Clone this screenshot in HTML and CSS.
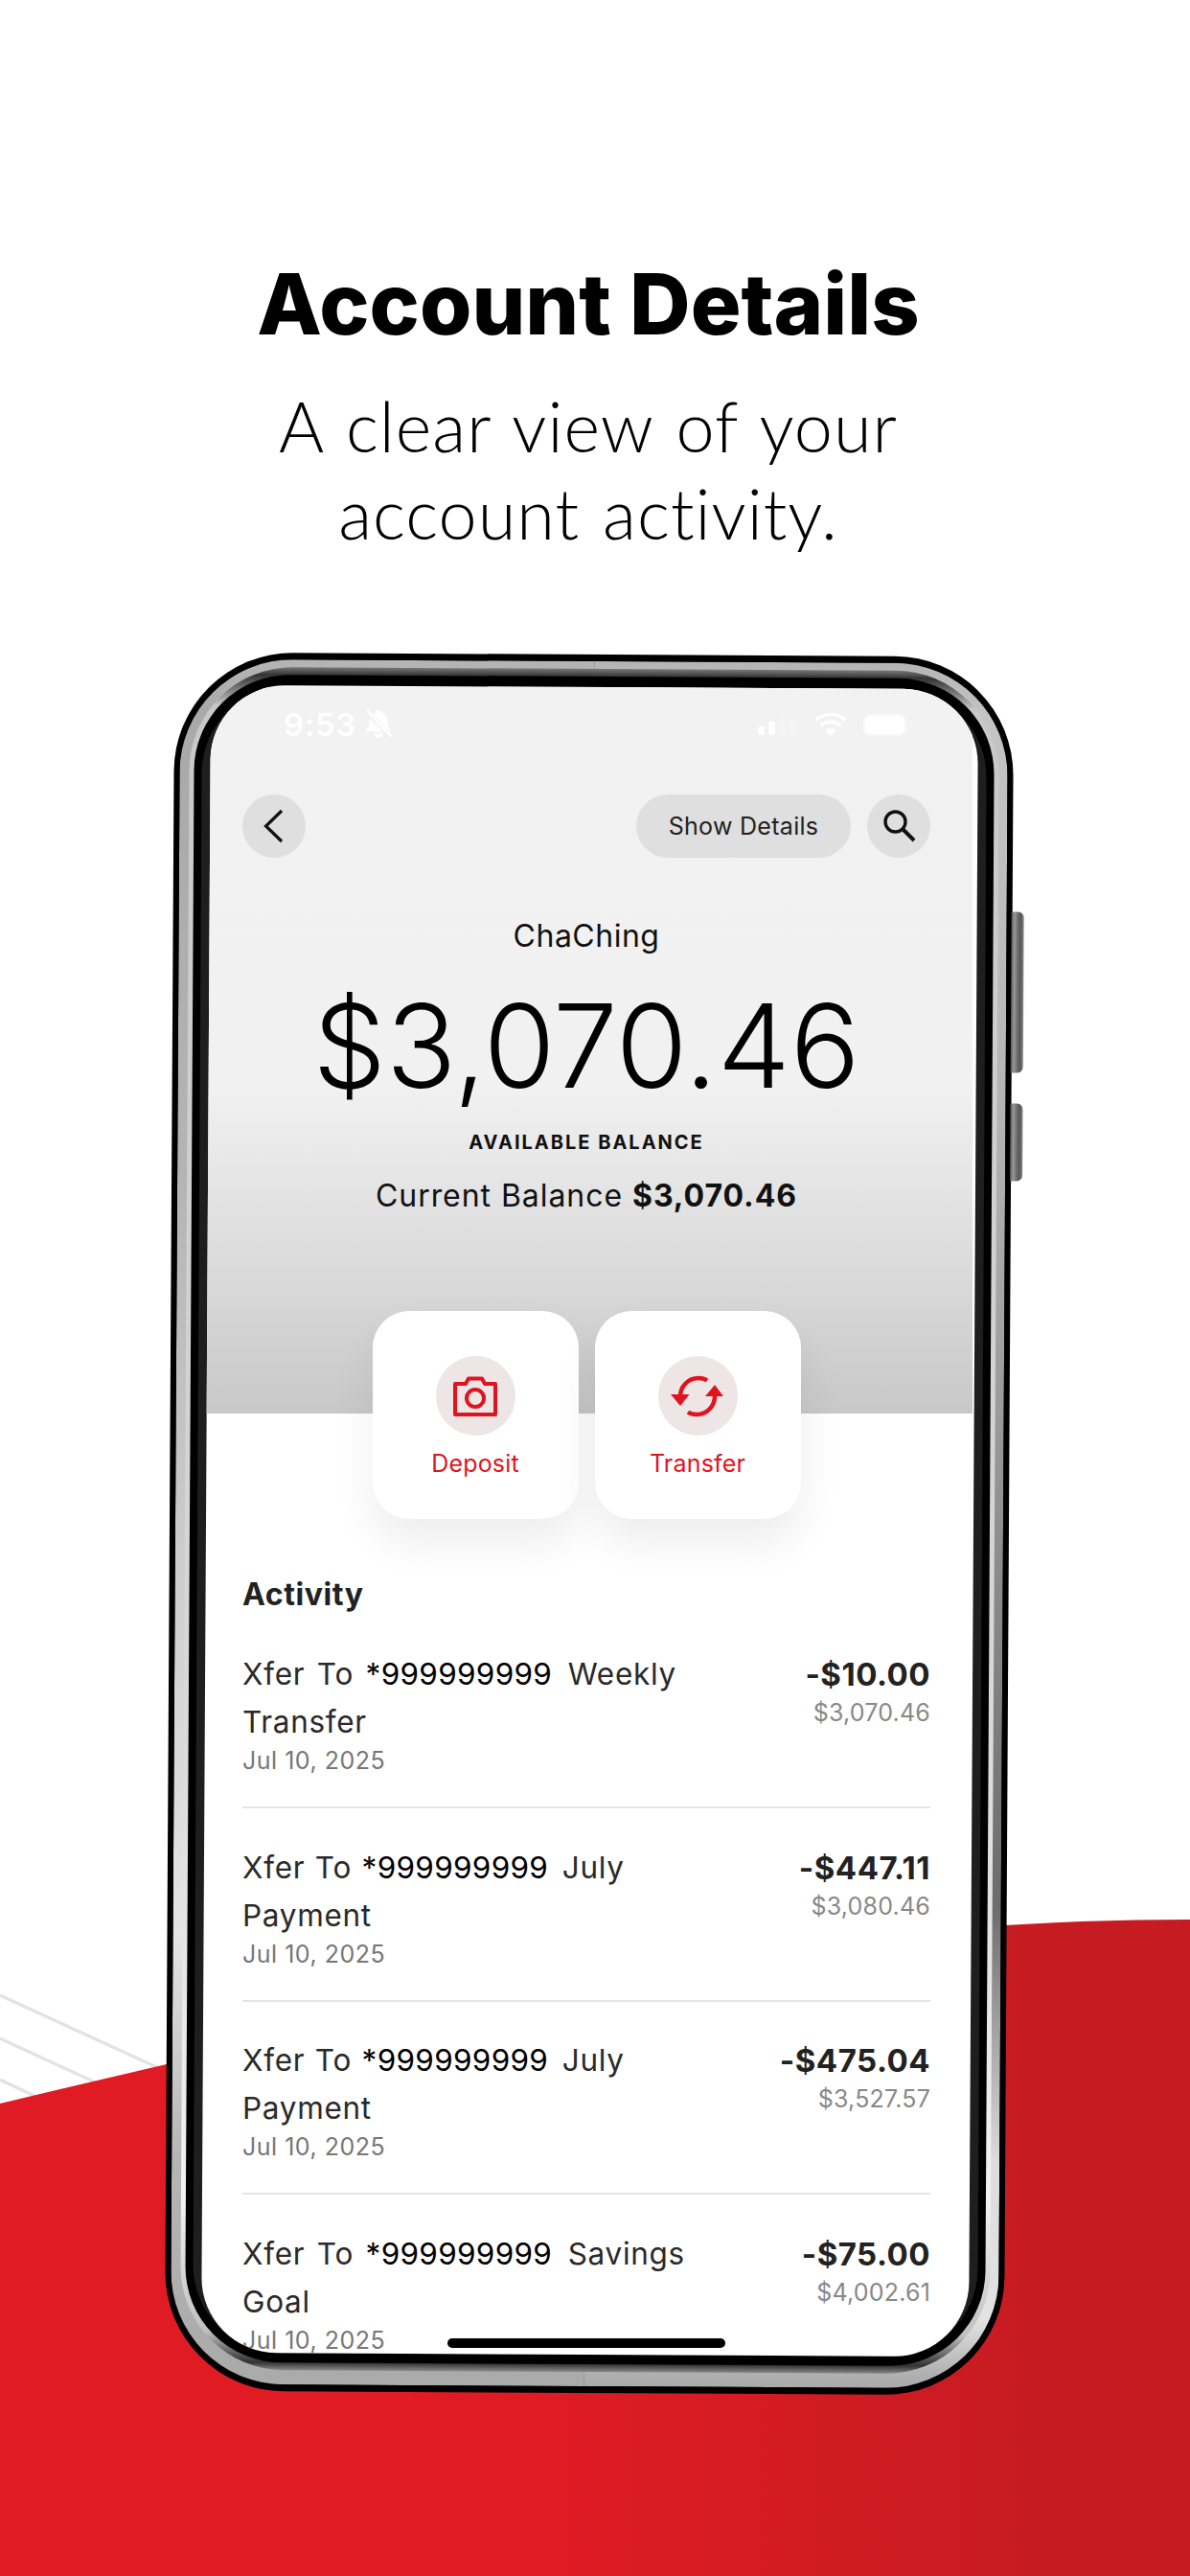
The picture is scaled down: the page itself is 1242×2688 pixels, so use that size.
FILE: index.html
```html
<!DOCTYPE html>
<html lang="en">
<head>
  <meta charset="UTF-8">
  <title>Account Details</title>
  <link rel="stylesheet" href="styles.css">
</head>
<body>

<!-- red wave and grey lines behind the phone -->
<svg class="backdrop" width="1242" height="2688" viewBox="0 0 1242 2688">
  <defs>
    <linearGradient id="redfade" x1="0" y1="0" x2="1" y2="0">
      <stop offset="0" stop-color="#e01b24"/>
      <stop offset="0.45" stop-color="#e01b24"/>
      <stop offset="0.86" stop-color="#c71b22"/>
      <stop offset="1" stop-color="#c71b22"/>
    </linearGradient>
  </defs>
  <g stroke="#e2e4e4" stroke-width="3.500" fill="none">
    <path d="M0 2082 L170 2160"/>
    <path d="M0 2127 L104 2175"/>
    <path d="M0 2170 L38 2188"/>
  </g>
  <path d="M0 2195 C400 2100 800 2003 1242 2003 L1242 2688 L0 2688 Z" fill="url(#redfade)"/>
</svg>

<header class="hero">
  <h1>Account Details</h1>
  <p>A clear view of your<br>account activity.</p>
</header>

<div class="device">
  <span class="side-btn side-btn-top"></span>
  <span class="side-btn side-btn-low"></span>
  <div class="device-metal">
    <div class="device-ring">
      <div class="device-bezel">
        <div class="device-edge">
          <div class="screen">
            <div class="screen-content">

              <section class="summary">
                <div class="status">
                  <div class="status-left">
                    <span class="time">9:53</span>
                    <svg width="30" height="32" viewBox="0 0 30 32" fill="#fff">
                      <path d="M15 1c1.600 0 2.700 1 2.900 2.400 4.300 1.300 6.300 4.800 6.500 9l.3 5 3.800 6.100H1.500l3.800-6.100.3-5c.2-4.200 2.200-7.700 6.500-9C12.300 2 13.400 1 15 1z"/>
                      <path d="M10.500 25.500h9c-.4 2.800-2.200 4.500-4.500 4.500s-4.100-1.700-4.500-4.500z"/>
                      <path d="M2 1 L29 30" stroke="#f2f2f2" stroke-width="5.500"/>
                      <path d="M3 1 L29 29" stroke="#fff" stroke-width="2.500"/>
                    </svg>
                  </div>
                  <div class="status-right">
                    <div class="signal">
                      <i class="bar-a"></i><i class="bar-b"></i><i class="bar-c"></i><i class="bar-d"></i>
                    </div>
                    <svg width="34" height="26" viewBox="0 0 34 26" fill="none" stroke="#fff" stroke-width="3.600">
                      <path d="M1.500 8.500C10 .5 24 .5 32.500 8.500"/>
                      <path d="M7 14c5.500-5 14.500-5 20 0"/>
                      <path d="M17 25l-5.500-6c3-2.600 8-2.600 11 0z" fill="#fff" stroke="none"/>
                    </svg>
                    <span class="battery"></span>
                  </div>
                </div>

                <div class="topbar">
                  <button class="round-btn">
                    <svg width="24" height="36" viewBox="0 0 24 36" fill="none" stroke="#111" stroke-width="3.200">
                      <path d="M20 2 L3.500 18 L20 34"/>
                    </svg>
                  </button>
                  <div class="topbar-right">
                    <button class="pill-btn">Show Details</button>
                    <button class="round-btn">
                      <svg width="36" height="36" viewBox="0 0 36 36" fill="none" stroke="#111" stroke-width="3.400">
                        <circle cx="14.500" cy="13.500" r="10.500"/>
                        <path d="M22 21 L34 33" stroke-width="4"/>
                      </svg>
                    </button>
                  </div>
                </div>

                <div class="acct-name">ChaChing</div>
                <div class="balance">$3,070.46</div>
                <div class="balance-label">AVAILABLE BALANCE</div>
                <div class="balance-current">Current Balance <b>$3,070.46</b></div>

                <div class="actions">
                  <div class="action-card">
                    <span class="action-icon">
                      <svg width="48" height="44" viewBox="0 0 48 44" fill="none" stroke="#e0141f" stroke-width="4" stroke-linejoin="round">
                        <path d="M3 9h11l3-5.500h14L34 9h11v32H3z"/>
                        <circle cx="24" cy="24" r="9"/>
                      </svg>
                    </span>
                    <span class="action-label">Deposit</span>
                  </div>
                  <div class="action-card">
                    <span class="action-icon">
                      <svg width="56" height="44" viewBox="0 0 56 44" fill="none" stroke="#e0141f" stroke-width="4.500">
                        <path d="M10 22C10 12 18 3 29 3c4 0 7 1 9 2.500"/>
                        <path d="M46 22c0 10-8 19-19 19-4 0-7-1-9-2.500"/>
                        <path d="M0 20h19.500L10 32z" fill="#e0141f" stroke="none"/>
                        <path d="M55 22H36L46 10z" fill="#e0141f" stroke="none"/>
                      </svg>
                    </span>
                    <span class="action-label">Transfer</span>
                  </div>
                </div>
              </section>

              <section class="activity">
                <h2>Activity</h2>

                <div class="txn">
                  <div class="txn-main">
                    <div class="txn-title">Xfer To <em>*999999999</em> Weekly Transfer</div>
                    <div class="txn-date">Jul 10, 2025</div>
                  </div>
                  <div class="txn-side">
                    <div class="txn-amount">-$10.00</div>
                    <div class="txn-after">$3,070.46</div>
                  </div>
                </div>

                <div class="txn">
                  <div class="txn-main">
                    <div class="txn-title txn-title-tight">Xfer To <em>*999999999</em> July Payment</div>
                    <div class="txn-date">Jul 10, 2025</div>
                  </div>
                  <div class="txn-side">
                    <div class="txn-amount">-$447.11</div>
                    <div class="txn-after">$3,080.46</div>
                  </div>
                </div>

                <div class="txn">
                  <div class="txn-main">
                    <div class="txn-title txn-title-tight">Xfer To <em>*999999999</em> July Payment</div>
                    <div class="txn-date">Jul 10, 2025</div>
                  </div>
                  <div class="txn-side">
                    <div class="txn-amount">-$475.04</div>
                    <div class="txn-after">$3,527.57</div>
                  </div>
                </div>

                <div class="txn">
                  <div class="txn-main">
                    <div class="txn-title">Xfer To <em>*999999999</em> Savings Goal</div>
                    <div class="txn-date">Jul 10, 2025</div>
                  </div>
                  <div class="txn-side">
                    <div class="txn-amount">-$75.00</div>
                    <div class="txn-after">$4,002.61</div>
                  </div>
                </div>
              </section>

              <div class="home-bar"></div>
            </div>
          </div>
        </div>
      </div>
    </div>
  </div>
</div>

</body>
</html>
```

FILE: styles.css
```css
* {
  box-sizing: border-box;
}
body {
  margin: 0;
  width: 1242px;
  height: 2688px;
  position: relative;
  overflow: hidden;
  background-color: #ffffff;
  color: #000;
  font-family: Inter, "Liberation Sans", sans-serif;
}
.backdrop {
  position: absolute;
  left: 0;
  top: 0;
}

/* headline */
.hero {
  position: relative;
  padding: 267px 14px 0 0;
  text-align: center;
}
.hero h1 {
  margin: 0;
  font-size: 88px;
  line-height: 100px;
  font-weight: 800;
}
.hero p {
  margin: 32px 0 0;
  font-family: Lato, "Liberation Sans", sans-serif;
  font-size: 72px;
  line-height: 91px;
  font-weight: 300;
  letter-spacing: 1px;
  word-spacing: 3.500px;
}

/* phone frame */
.device {
  position: absolute;
  left: 177px;
  top: 683px;
  width: 876px;
  height: 1814px;
  transform: rotate(0.33deg);
  display: flex;
  padding: 7px 6px;
  background: #000;
  border-radius: 124px;
}
.side-btn {
  position: absolute;
  right: -12px;
  width: 13px;
  border-radius: 0 6px 6px 0;
  background: linear-gradient(90deg, #555, #999 25%, #777 45%, #555 75%, #888);
}
.side-btn-top {
  top: 266px;
  height: 168px;
}
.side-btn-low {
  top: 466px;
  height: 81px;
}
/* each side of the metal catches different light */
.device-metal {
  flex: 1;
  display: flex;
  padding: 8px 9px 15px 10px;
  border-radius: 118px;
  background:
    linear-gradient(180deg, #b5b5b5 0, #a9a9a9 3%, #b4b4b4 30%, #e4e4e4 74%, #b5b5b5 87%, #aaaaaa 100%) left / 50% 100% no-repeat,
    linear-gradient(180deg, #b5b5b5 0, #c4c4c4 3%, #b5b5b5 25%, #a8a8a8 35%, #6c6c6c 72%, #999 78%, #dddddd 87%, #e2e2e2 96%, #b0b0b0 99.200%, #aaaaaa 100%) right / 50% 100% no-repeat;
}
.device-ring {
  flex: 1;
  display: flex;
  padding: 8px 5px;
  border-radius: 108px;
  background: linear-gradient(180deg, #777 0, #333 8px, #c8c8c8 40px, #d8d8d8 60%, #f2f2f2 90%, #c0c0c0 calc(100% - 40px), #333 calc(100% - 8px), #888 100%);
}
.device-bezel {
  flex: 1;
  display: flex;
  padding: 11px 8px 10px;
  border-radius: 100px;
  background: #000;
}
.device-edge {
  flex: 1;
  display: flex;
  padding: 0 9px;
  border-radius: 92px;
  background: #1e1e1e;
}
.screen {
  flex: 1;
  overflow: hidden;
  border-radius: 78px;
  background: #fff;
}
/* the picture inside the frame sits straight */
.screen-content {
  width: 800px;
  height: 1740px;
  position: relative;
  transform: rotate(-0.33deg);
}

/* top part of the app */
.summary {
  height: 758px;
  padding: 24px 44px 0 38px;
  background: linear-gradient(180deg, #f2f2f2 0, #f1f1f1 55%, #c8c8c8 100%);
  text-align: center;
}
.status {
  height: 30px;
  display: flex;
  justify-content: space-between;
  align-items: center;
  padding: 0 27px 0 43px;
}
.status-left {
  display: flex;
  align-items: center;
  gap: 8px;
}
.time {
  color: #fff;
  font-size: 33px;
  font-weight: 600;
  line-height: 30px;
  letter-spacing: 0.6px;
}
.status-right {
  display: flex;
  align-items: center;
  gap: 19px;
}
.signal {
  display: flex;
  align-items: flex-end;
  gap: 4px;
  height: 22px;
}
.signal i {
  display: block;
  width: 7px;
  background: #fff;
  border-radius: 2px;
}
.signal .bar-a {
  height: 9px;
}
.signal .bar-b {
  height: 14px;
}
.signal .bar-c {
  height: 18px;
  background: #f4f4f4;
}
.signal .bar-d {
  height: 22px;
  background: #f4f4f4;
}
.battery {
  display: block;
  width: 41px;
  height: 19px;
  background: #fff;
  border-radius: 6px;
  box-shadow: 0 0 0 2px #f8f8f8;
}

.topbar {
  margin-top: 58px;
  display: flex;
  justify-content: space-between;
}
.topbar-right {
  display: flex;
  gap: 17px;
}
.round-btn {
  width: 66px;
  height: 66px;
  padding: 0;
  border: 0;
  border-radius: 50%;
  background: #dfdfdf;
  display: flex;
  align-items: center;
  justify-content: center;
}
.pill-btn {
  width: 224px;
  height: 66px;
  padding: 0;
  border: 0;
  border-radius: 33px;
  background: #dfdfdf;
  color: #222;
  font-family: inherit;
  font-size: 25px;
  letter-spacing: 0.3px;
}

.acct-name {
  margin-top: 62px;
  font-size: 32px;
  line-height: 40px;
  letter-spacing: 0.5px;
  color: #111;
}
.balance {
  margin-top: 29px;
  font-size: 121px;
  line-height: 130px;
  font-weight: 300;
  color: #000;
}
.balance-label {
  margin-top: 22px;
  font-size: 20px;
  line-height: 28px;
  font-weight: 700;
  letter-spacing: 2px;
  color: #111;
}
.balance-current {
  margin-top: 22px;
  font-size: 32px;
  line-height: 40px;
  letter-spacing: 0.950px;
  color: #111;
}
.balance-current b {
  font-weight: 700;
}

.actions {
  margin-top: 100px;
  display: flex;
  justify-content: center;
  gap: 17px;
}
.action-card {
  width: 215px;
  height: 217px;
  padding-top: 47px;
  background: #fff;
  border-radius: 38px;
  box-shadow: 0 24px 44px rgba(0, 0, 0, 0.07);
  display: flex;
  flex-direction: column;
  align-items: center;
}
.action-icon {
  width: 83px;
  height: 83px;
  border-radius: 50%;
  background: #ede5e6;
  display: flex;
  align-items: center;
  justify-content: center;
}
.action-label {
  margin-top: 14px;
  font-size: 25px;
  line-height: 30px;
  letter-spacing: 0.200px;
  color: #e0141f;
}

/* activity list */
.activity {
  padding: 169px 44px 0 38px;
}
.activity h2 {
  margin: 0 0 38px;
  font-size: 32px;
  line-height: 40px;
  font-weight: 700;
  letter-spacing: 0.600px;
  color: #222;
}
.txn {
  display: flex;
  justify-content: space-between;
  padding-bottom: 33px;
  margin-bottom: 36.600px;
  border-bottom: 2px solid #e5e5e5;
}
.txn-main {
  width: 480px;
}
.txn-title {
  font-size: 31.500px;
  line-height: 50px;
  letter-spacing: 0.7px;
  word-spacing: 3px;
  color: #2a2a2a;
}
.txn-title-tight {
  word-spacing: 1px;
}
.txn-title em {
  font-style: normal;
  letter-spacing: 0.300px;
  margin-right: 4px;
  color: #000;
}
.txn-date {
  font-size: 25px;
  line-height: 30px;
  letter-spacing: 0.5px;
  color: #777;
}
.txn-side {
  text-align: right;
}
.txn-amount {
  font-size: 33px;
  line-height: 50px;
  font-weight: 700;
  letter-spacing: 0.500px;
  color: #222;
}
.txn-after {
  font-size: 25px;
  line-height: 30px;
  letter-spacing: 0.200px;
  color: #888;
}
.home-bar {
  position: absolute;
  left: 252px;
  bottom: 7px;
  width: 290px;
  height: 10px;
  border-radius: 5px;
  background: #000;
}
```
